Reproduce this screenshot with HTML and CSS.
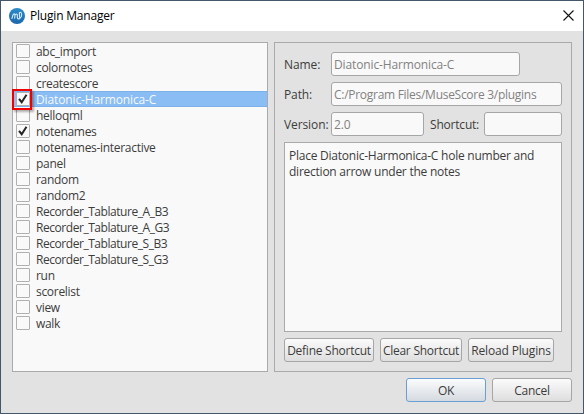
FILE: index.html
```html
<!DOCTYPE html>
<html lang="en">
<head>
<meta charset="utf-8">
<title>Plugin Manager</title>
<link rel="stylesheet" href="styles.css">
</head>
<body>
<div class="window">
  <header class="titlebar">
    <svg class="logo" width="16" height="16" viewBox="0 0 16 16"><defs><linearGradient id="g" x1="0" y1="0" x2="0" y2="1"><stop offset="0" stop-color="#2c8cc8"/><stop offset="1" stop-color="#1b68ac"/></linearGradient></defs><circle cx="8" cy="8" r="8" fill="url(#g)"/><path d="M2.8 10.8 4 6.8Q5.8 4.9 6 7L5.6 10.6M6 7.2Q8.4 4.6 8.3 7.5V9.4Q8.5 11.4 10.5 10.7 12.7 9.6 12.7 6.6 12.5 4.2 11.2 4.3 10 4.5 10.4 6.6L10.8 10.6" fill="none" stroke="#d4eafa" stroke-width="1.1"/></svg>
    <h1 class="title">Plugin Manager</h1>
    <svg class="close" width="11" height="11" viewBox="0 0 11 11"><path d="M.5.5l10 10M10.5.5l-10 10" stroke="#111" stroke-width="1.1"/></svg>
  </header>
  <main class="content">
    <ul class="list">
      <li class="row"><i class="box"></i><span class="text">abc_import</span></li>
      <li class="row"><i class="box"></i><span class="text">colornotes</span></li>
      <li class="row"><i class="box"></i><span class="text">createscore</span></li>
      <li class="row selected"><i class="box"><svg class="tick" viewBox="0 0 14 14"><path d="M3 6.8 5.7 10.2 10.5 2.8"/></svg></i><span class="text wide">Diatonic-Harmonica-C</span><b class="mark"></b></li>
      <li class="row"><i class="box"></i><span class="text">helloqml</span></li>
      <li class="row"><i class="box"><svg class="tick" viewBox="0 0 14 14"><path d="M3 6.8 5.7 10.2 10.5 2.8"/></svg></i><span class="text">notenames</span></li>
      <li class="row"><i class="box"></i><span class="text">notenames-interactive</span></li>
      <li class="row"><i class="box"></i><span class="text">panel</span></li>
      <li class="row"><i class="box"></i><span class="text">random</span></li>
      <li class="row"><i class="box"></i><span class="text">random2</span></li>
      <li class="row"><i class="box"></i><span class="text tight">Recorder_Tablature_A_B3</span></li>
      <li class="row"><i class="box"></i><span class="text tight">Recorder_Tablature_A_G3</span></li>
      <li class="row"><i class="box"></i><span class="text tight">Recorder_Tablature_S_B3</span></li>
      <li class="row"><i class="box"></i><span class="text tight">Recorder_Tablature_S_G3</span></li>
      <li class="row"><i class="box"></i><span class="text">run</span></li>
      <li class="row"><i class="box"></i><span class="text">scorelist</span></li>
      <li class="row"><i class="box"></i><span class="text">view</span></li>
      <li class="row"><i class="box"></i><span class="text">walk</span></li>
    </ul>
    <section class="panel">
      <div class="field"><span class="label">Name:</span><div class="input name">Diatonic-Harmonica-C</div></div>
      <div class="field"><span class="label">Path:</span><div class="input path">C:/Program Files/MuseScore 3/plugins</div></div>
      <div class="field"><span class="label">Version:</span><div class="input version">2.0</div><span class="label shortcut-label">Shortcut:</span><div class="input shortcut"></div></div>
      <div class="description">Place Diatonic-Harmonica-C hole number and<br>direction arrow under the notes</div>
      <div class="actions">
        <button class="button define">Define Shortcut</button>
        <button class="button clear">Clear Shortcut</button>
        <button class="button reload">Reload Plugins</button>
      </div>
    </section>
  </main>
  <footer class="footer">
    <button class="button dialog default">OK</button>
    <button class="button dialog">Cancel</button>
  </footer>
</div>
</body>
</html>
```
FILE: styles.css
```css
* { box-sizing: border-box; }
body { margin: 0; font: 12px/16px "Open Sans", "Noto Sans", sans-serif; color: #3c3c3c; }
.window { width: 584px; height: 414px; border: 1px solid #44586a; background: #e2e2e2; overflow: hidden; }
.titlebar { height: 30px; background: #fff; display: flex; align-items: center; padding: 0 9px 0 8px; }
.logo { margin-top: -1px; }
.title { margin: 0 0 0 5px; font-size: 12px; font-weight: 400; color: #000; flex: 1; letter-spacing: -.2px; }
.close { margin-top: -2px; }
.content { display: flex; gap: 6px; padding: 11px 11px 0; }
.list { width: 256px; height: 330px; margin: 0; padding: 0; list-style: none; border: 1px solid #aaa; background: #f9f9f9; }
.row { position: relative; height: 16px; display: flex; align-items: center; gap: 6px; padding-left: 3px; white-space: nowrap; }
.text { padding-top: 2px; letter-spacing: -.3px; }
.tight { letter-spacing: -.45px; }
.wide { letter-spacing: -.13px; }
.box { width: 14px; height: 14px; border: 1px solid #b0b0b0; border-radius: 1px; background: #f9f9f9; flex: none; }
.tick { display: block; width: 14px; height: 14px; margin: -1px; fill: none; stroke: #252525; stroke-width: 2; }
.selected { background: #8abdf3; color: #f4f9ff; box-shadow: inset 0 1px #7bb0e8, inset 0 -1px #7bb0e8; }
.mark { position: absolute; left: -1px; top: -2px; width: 20px; height: 21px; border: 2px solid #f00000; box-shadow: 2px 2px 2px rgba(0,0,0,.3); z-index: 1; }
.panel { width: 298px; height: 330px; padding: 9px; border: 1px solid #aaa; display: flex; flex-direction: column; gap: 6px; }
.field { height: 24px; display: flex; align-items: center; }
.label { width: 47px; white-space: nowrap; padding-top: 2px; letter-spacing: -.1px; }
.input { height: 24px; border: 1px solid #a6a6a6; border-radius: 3px; background: #f9f9f9; color: #828282; line-height: 24px; padding-left: 2px; white-space: nowrap; letter-spacing: -.13px; }
.name { width: 189px; }
.path { width: 231px; letter-spacing: -.28px; }
.version { width: 93px; }
.shortcut-label { width: 54px; margin-left: 6px; letter-spacing: -.2px; }
.shortcut { width: 78px; }
.description { height: 190px; padding: 5px 4px; border: 1px solid #aaa; background: #f9f9f9; white-space: nowrap; letter-spacing: -.24px; }
.actions { display: flex; gap: 6px; }
.button { height: 24px; padding: 2px 0 0; border: 1px solid #a6a6a6; border-radius: 3px; background: linear-gradient(#fbfbfb, #dedede); color: inherit; font: inherit; white-space: nowrap; letter-spacing: -.25px; }
.define { width: 90px; }
.clear { width: 82px; }
.reload { width: 86px; letter-spacing: -.15px; }
.footer { display: flex; justify-content: flex-end; gap: 6px; padding: 6px 11px 0 0; }
.dialog { width: 80px; }
.default { border-color: #6a9fd4; background: linear-gradient(#fbfcfd, #d5dae0); }
```
